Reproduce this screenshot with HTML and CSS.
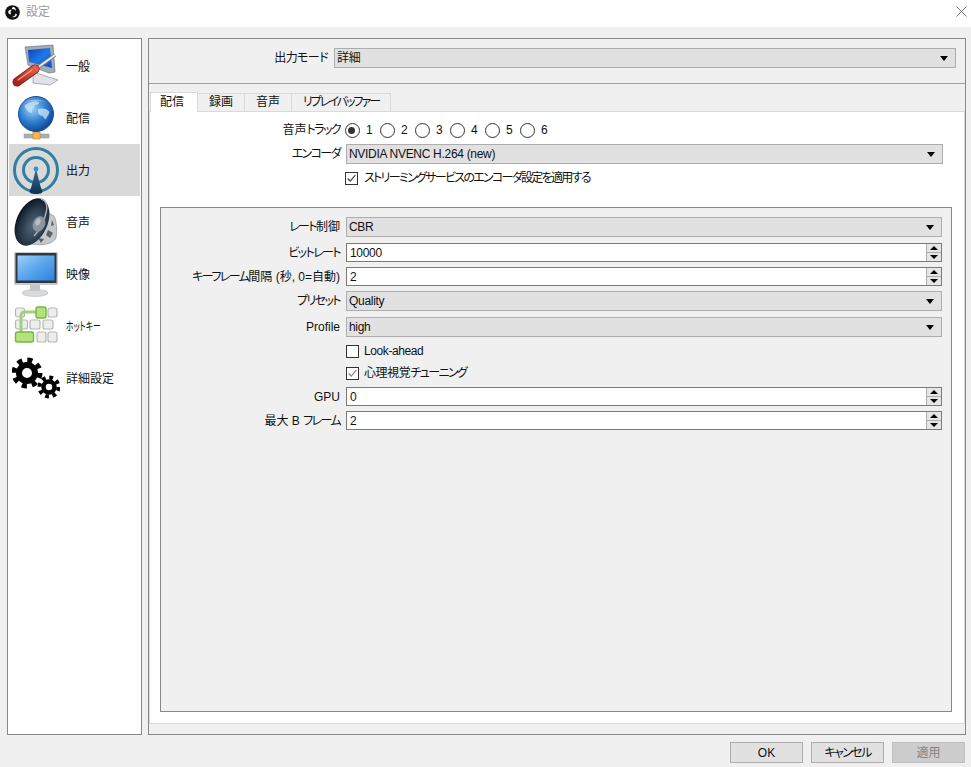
FILE: index.html
```html
<!DOCTYPE html>
<html lang="ja">
<head>
<meta charset="utf-8">
<title>設定</title>
<link rel="stylesheet" href="styles.css">
</head>
<body>
<div class="window">
  <header class="titlebar">
    <svg class="logo" viewBox="0 0 16 16" width="15" height="15"><circle cx="8" cy="8" r="7.800" fill="#111"/><path d="M8.500 2.200a3.200 3.200 0 0 1 3 4A3.600 3.600 0 0 0 7.300 4.400 2.500 2.500 0 0 1 8.500 2.200zM3.300 7.200a3.200 3.200 0 0 1 3.700-1.900 3.600 3.600 0 0 0-.5 4.500 2.500 2.500 0 0 1-2.200-.5A3.200 3.200 0 0 1 3.300 7.200zM12.600 9.500a3.200 3.200 0 0 1-5 3 3.600 3.600 0 0 0 3.500-3.200 2.500 2.500 0 0 1 1.500.2z" fill="#fff"/></svg>
    <span class="title">設定</span>
    <svg class="close" viewBox="0 0 11 11" width="11" height="11"><path d="M.5.5l10 10M10.500.5l-10 10" stroke="#777" stroke-width="1" fill="none"/></svg>
  </header>

  <main class="main">
    <nav class="sidebar">
      <div class="item">
        <svg class="icon" viewBox="0 0 48 52" width="48" height="52">
          <defs>
            <linearGradient id="scr" x1="0" y1="0" x2="1" y2="1"><stop offset="0" stop-color="#0a3fc0"/><stop offset=".5" stop-color="#1f78e4"/><stop offset="1" stop-color="#0a4cc8"/></linearGradient>
            <linearGradient id="hnd" x1="0" y1="1" x2="1" y2="0"><stop offset="0" stop-color="#a8241c"/><stop offset="1" stop-color="#e0604a"/></linearGradient>
          </defs>
          <path d="M21 32l25 8-8 5-17-2z" fill="#dfe2e8" stroke="#8d939c" stroke-width=".7"/>
          <path d="M13 7l28-2 2 27-6 1-21-8z" fill="#a4abb6" stroke="#6f7680" stroke-width=".7"/>
          <path d="M16 10l22-2 2 20-23-6z" fill="url(#scr)"/>
          <path d="M25 28L43 15" stroke="#777d85" stroke-width="3.600"/>
          <path d="M25 28L43 15" stroke="#e8eaee" stroke-width="2"/>
          <path d="M5 42L23 29" stroke="#7c1a14" stroke-width="9" stroke-linecap="round"/>
          <path d="M5 42L23 29" stroke="url(#hnd)" stroke-width="7.600" stroke-linecap="round"/>
          <path d="M6 40l14-10" stroke="#f2a090" stroke-width="1.200" stroke-linecap="round"/>
        </svg>
        <span class="nav-text">一般</span>
      </div>
      <div class="item">
        <svg class="icon" viewBox="0 0 48 52" width="48" height="52">
          <defs>
            <radialGradient id="glb" cx=".4" cy=".35" r=".7"><stop offset="0" stop-color="#9fd0f5"/><stop offset=".55" stop-color="#2f7fd0"/><stop offset="1" stop-color="#0c3f8c"/></radialGradient>
          </defs>
          <rect x="12" y="42" width="25" height="4" fill="#aab0b4" stroke="#8a9094" stroke-width=".5"/>
          <rect x="23" y="35" width="3" height="7" fill="#b9b9b9"/>
          <rect x="21" y="40" width="7" height="7" fill="#f6b552" stroke="#c98a2c" stroke-width=".7"/>
          <circle cx="24" cy="22" r="17.500" fill="url(#glb)" stroke="#16509c" stroke-width="1"/>
          <path d="M13 13c4-3 10-5 14-3 1 2-2 3-4 3-1 3-4 4-3 7-1 2-4 0-5-2-1-1-3-3-2-5zM26 17c3-1 8-1 11 2 1 3-2 5-3 8-1 1-2-1-3-3-2 0-4-1-5-3z" fill="#cfe6f7" opacity=".75"/>
          <path d="M12 11a17 11 0 0 1 24 0c-6-3-18-3-24 0z" fill="#fff" opacity=".4"/>
        </svg>
        <span class="nav-text">配信</span>
      </div>
      <div class="item active">
        <svg class="icon" viewBox="0 0 48 52" width="48" height="52">
          <defs>
            <linearGradient id="cone" x1="0" y1="0" x2="0" y2="1"><stop offset="0" stop-color="#3d6f96"/><stop offset="1" stop-color="#0f2f4d"/></linearGradient>
          </defs>
          <circle cx="24" cy="26" r="21.500" fill="none" stroke="#2f7f9f" stroke-width="3"/>
          <circle cx="24" cy="26" r="12.500" fill="none" stroke="#2f7f9f" stroke-width="3"/>
          <path d="M24 25c2 6 4 18 6 21 2 3-2 4-6 4s-8-1-6-4c2-3 4-15 6-21z" fill="url(#cone)"/>
          <circle cx="24" cy="25" r="2.400" fill="#2f8fd8"/>
        </svg>
        <span class="nav-text">出力</span>
      </div>
      <div class="item">
        <svg class="icon" viewBox="0 0 48 52" width="48" height="52">
          <defs>
            <radialGradient id="spk" cx=".6" cy=".55" r=".6"><stop offset="0" stop-color="#566a7c"/><stop offset=".6" stop-color="#2a3c4c"/><stop offset="1" stop-color="#0d1620"/></radialGradient>
          </defs>
          <path d="M26 12l16 8c3 6 3 15 2 22-3 6-14 8-24 6z" fill="#c4c9cc" stroke="#7a8084" stroke-width=".6"/>
          <path d="M36 34l5 3-3 5-4-3zM26 42l6 1-3 4zM40 24l2 5-3 1z" fill="#5a6266"/>
          <ellipse cx="20" cy="26" rx="15.500" ry="25" transform="rotate(24 20 26)" fill="url(#spk)"/>
          <path d="M29 3c5 1 7 6 5 14-2 9-6 17-12 23" fill="none" stroke="#a9b2b9" stroke-width="1.400"/>
          <ellipse cx="27" cy="28" rx="6" ry="8" transform="rotate(25 27 28)" fill="#8a959d"/>
          <ellipse cx="26" cy="26" rx="2.500" ry="3.500" transform="rotate(25 26 26)" fill="#b8c0c6"/>
        </svg>
        <span class="nav-text">音声</span>
      </div>
      <div class="item">
        <svg class="icon" viewBox="0 0 48 52" width="48" height="52">
          <defs>
            <linearGradient id="mon" x1="0" y1="0" x2="1" y2="1"><stop offset="0" stop-color="#9fd0f8"/><stop offset=".5" stop-color="#5aa6ee"/><stop offset="1" stop-color="#2f80dc"/></linearGradient>
          </defs>
          <ellipse cx="23" cy="45" rx="13" ry="3.500" fill="#d8dadc" stroke="#b8babc" stroke-width=".6"/>
          <rect x="18" y="36" width="10" height="7" fill="#c4c6c8"/>
          <rect x="2" y="4" width="44" height="33" rx="1.500" fill="#c9cbcd"/>
          <rect x="3.500" y="5" width="41" height="30" fill="#30383f"/>
          <rect x="5.500" y="7.500" width="37" height="25" fill="url(#mon)"/>
        </svg>
        <span class="nav-text">映像</span>
      </div>
      <div class="item">
        <svg class="icon" viewBox="0 0 48 52" width="48" height="52">
          <g fill="#eceeec" stroke="#b7b7b7" stroke-width="1.200">
            <rect x="3.500" y="8" width="9" height="9" rx="2"/>
            <rect x="36" y="8" width="9" height="9" rx="2"/>
            <rect x="3.500" y="20" width="12" height="9" rx="2"/>
            <rect x="18" y="20" width="10" height="9" rx="2"/>
            <rect x="31" y="20" width="10" height="9" rx="2"/>
            <rect x="25" y="32" width="9" height="10" rx="2"/>
            <rect x="36" y="32" width="9" height="10" rx="2"/>
          </g>
          <path d="M9 33V16c0-3 1-4 4-4h13" fill="none" stroke="#a5cf80" stroke-width="3"/>
          <rect x="24" y="7" width="10" height="11" rx="2" fill="#b4e27e" stroke="#76b83e" stroke-width="1.400"/>
          <rect x="3.500" y="32" width="18" height="10" rx="2" fill="#b4e27e" stroke="#76b83e" stroke-width="1.400"/>
        </svg>
        <span class="nav-text narrow">ホットキー</span>
      </div>
      <div class="item">
        <svg class="icon" viewBox="0 0 48 52" width="48" height="52">
          <g fill="none" stroke="#000">
            <circle cx="15" cy="21" r="8" stroke-width="6"/>
            <circle cx="15" cy="21" r="13" stroke-width="5" stroke-dasharray="5.100 5.100"/>
            <circle cx="37" cy="35" r="5.500" stroke-width="4.500"/>
            <circle cx="37" cy="35" r="9.500" stroke-width="4" stroke-dasharray="3.730 3.730"/>
          </g>
        </svg>
        <span class="nav-text">詳細設定</span>
      </div>
    </nav>

    <section class="panel">
      <div class="mode">
        <label class="mode-label"><span class="tight1">出力モード</span></label>
        <div class="combo"><span>詳細</span><i class="arrow"></i></div>
      </div>
      <div class="tabs-area">
        <div class="tabbar">
          <div class="tab selected w48">配信</div>
          <div class="tab w47">録画</div>
          <div class="tab w47">音声</div>
          <div class="tab w99"><span class="ka2">リプレイバッファー</span></div>
        </div>
        <div class="pane">
          <div class="form top-form">
            <div class="row">
              <label>音声<span class="ka">トラック</span></label>
              <div class="radios">
                <span class="radio on">1</span><span class="radio">2</span><span class="radio">3</span><span class="radio">4</span><span class="radio">5</span><span class="radio">6</span>
              </div>
            </div>
            <div class="row">
              <label><span class="ka">エンコーダ</span></label>
              <div class="combo"><span>NVIDIA NVENC H.264 (new)</span><i class="arrow"></i></div>
            </div>
            <div class="row">
              <label></label>
              <div class="check checked"><i class="box"><svg viewBox="0 0 13 13" width="11" height="11"><path d="M2 6.500l3 3 6-7" fill="none" stroke="#444" stroke-width="1.500"/></svg></i><span class="long">ストリーミングサービスのエンコーダ設定を適用する</span></div>
            </div>
          </div>
          <div class="group">
            <div class="form">
              <div class="row has-combo"><label><span class="ka">レート</span>制御</label><div class="combo"><span>CBR</span><i class="arrow"></i></div></div>
              <div class="row has-spin"><label><span class="ka">ビットレート</span></label><div class="spin"><span>10000</span><div class="spin-btns"><b class="up"></b><b class="down"></b></div></div></div>
              <div class="row has-spin"><label><span class="ka">キーフレーム</span>間隔 (秒, 0=自動)</label><div class="spin"><span>2</span><div class="spin-btns"><b class="up"></b><b class="down"></b></div></div></div>
              <div class="row has-combo"><label><span class="ka">プリセット</span></label><div class="combo"><span>Quality</span><i class="arrow"></i></div></div>
              <div class="row has-combo"><label>Profile</label><div class="combo"><span>high</span><i class="arrow"></i></div></div>
              <div class="row has-check first"><label></label><div class="check"><i class="box"></i><span>Look-ahead</span></div></div>
              <div class="row has-check"><label></label><div class="check checked"><i class="box"><svg viewBox="0 0 13 13" width="11" height="11"><path d="M2 6.500l3 3 6-7" fill="none" stroke="#888" stroke-width="1.500"/></svg></i><span>心理視覚<span class="ka">チューニング</span></span></div></div>
              <div class="row has-spin"><label>GPU</label><div class="spin"><span>0</span><div class="spin-btns"><b class="up"></b><b class="down"></b></div></div></div>
              <div class="row has-spin"><label>最大 B <span class="ka">フレーム</span></label><div class="spin"><span>2</span><div class="spin-btns"><b class="up"></b><b class="down"></b></div></div></div>
            </div>
          </div>
        </div>
      </div>
    </section>
  </main>

  <footer class="buttons">
    <button class="btn">OK</button>
    <button class="btn"><span class="ka">キャンセル</span></button>
    <button class="btn disabled">適用</button>
  </footer>
</div>
</body>
</html>
```
FILE: styles.css
```css
* { box-sizing: border-box; }
html, body { margin: 0; padding: 0; }
body {
  background: #f0f0f0;
  font-family: "Liberation Sans", "Noto Sans CJK JP", sans-serif;
  font-feature-settings: "palt";
  font-size: 12px;
  color: #111;
  line-height: 16px;
}
.window { width: 971px; height: 767px; display: flex; flex-direction: column; overflow: hidden; }

.ka { letter-spacing: -1.600px; }
.ka2 { letter-spacing: -2px; }
.tight1 { letter-spacing: -.6px; }

.titlebar { height: 27px; background: #fff; display: flex; align-items: flex-start; padding: 5px 4px 0 5px; flex: none; }
.logo { flex: none; }
.title { margin-left: 6px; margin-top: -1px; color: #999; }
.close { margin-left: auto; margin-top: 1px; }

.main { display: flex; gap: 6px; padding: 11px 5px 0 7px; height: 708px; flex: none; }

.sidebar { width: 135px; height: 697px; flex: none; background: #fff; border: 1px solid #888; padding: 1px; }
.item { height: 52px; display: flex; align-items: center; padding-left: 3px; gap: 6px; white-space: nowrap; }
.item.active { background: #d9d9d9; }
.icon { flex: none; display: block; }
.nav-text { padding-top: 2px; }
.nav-text.narrow { transform: scaleX(.65); transform-origin: left center; }

.panel { flex: 1; height: 697px; border: 1px solid #888; display: flex; flex-direction: column; }
.mode { height: 45px; flex: none; border-bottom: 1px solid #a0a0a0; display: flex; align-items: flex-start; padding: 9px 9px 0 0; }
.mode-label { width: 179px; text-align: right; line-height: 20px; margin-right: 6px; flex: none; }
.mode .combo { flex: 1; }

.tabs-area { flex: 1; display: flex; flex-direction: column; min-height: 0; padding-bottom: 10px; }
.tabbar { display: flex; height: 27px; align-items: flex-end; padding-left: 1px; flex: none; }
.tab { height: 18px; background: #f0f0f0; border: 1px solid #d9d9d9; border-bottom: 0; border-left: 0; text-align: center; line-height: 17px; white-space: nowrap; }
.tab.selected { height: 20px; background: #fff; position: relative; top: 1px; border-left: 1px solid #d9d9d9; line-height: 19px; padding-right: 4px; }
.w48 { width: 48px; }
.w47 { width: 47px; }
.w99 { width: 99px; }
.pane { flex: 1; background: #fff; border: 1px solid #d9d9d9; padding: 8px 12px 11px 10px; display: flex; flex-direction: column; }

.form { display: flex; flex-direction: column; }
.top-form { height: 87px; flex: none; padding: 0 9px 0 1px; gap: 4px; }
.row { display: flex; align-items: center; height: 20px; gap: 6px; }
.row > label { width: 179px; flex: none; text-align: right; white-space: nowrap; }
.row.has-combo { margin-bottom: 6px; }
.row.has-spin { height: 19px; margin-bottom: 5px; }
.row.has-check { margin-bottom: 4px; }
.row.has-check.first { margin-top: -2px; margin-bottom: 2px; }

.group { flex: 1; background: #f0f0f0; border: 1px solid #888; padding: 9px 9px 0 0; }

.combo { flex: 1; height: 20px; background: #e1e1e1; border: 1px solid #adadad; display: flex; align-items: center; padding: 0 7px 0 2px; }
.combo > span { flex: 1; letter-spacing: -.3px; }
.arrow { width: 0; height: 0; border: 4px solid transparent; border-top: 5px solid #000; border-bottom: 0; flex: none; }

.spin { flex: 1; height: 19px; background: #fff; border: 1px solid #7a7a7a; display: flex; align-items: center; padding-left: 3px; }
.spin > span { flex: 1; letter-spacing: -.3px; }
.spin-btns { width: 15px; height: 17px; display: flex; flex-direction: column; flex: none; border-left: 1px solid #adadad; }
.spin-btns b { flex: 1; background: #e6e6e6; border-bottom: 1px solid #adadad; display: flex; align-items: center; justify-content: center; }
.spin-btns b:last-child { border-bottom: 0; }
.spin-btns b::before { content: ""; width: 0; height: 0; border: 4px solid transparent; }
.spin-btns .up::before { border-bottom: 4px solid #000; border-top: 0; }
.spin-btns .down::before { border-top: 4px solid #000; border-bottom: 0; }

.radios { display: flex; margin-left: -1px; }
.radio { width: 35px; display: flex; align-items: center; gap: 6px; position: relative; }
.radio::before { content: ""; width: 13px; height: 13px; border: 1px solid #333; border-radius: 50%; background: #fff; flex: none; }
.radio.on::after { content: ""; position: absolute; left: 3px; top: 50%; width: 7px; height: 7px; margin-top: -3.500px; border-radius: 50%; background: #333; }

.check { display: flex; align-items: center; gap: 5px; white-space: nowrap; }
.check > span { letter-spacing: -.4px; }
.check > .long { letter-spacing: -1.700px; }
.top-form .check { margin-left: -1px; gap: 6px; }
.box { width: 13px; height: 13px; border: 1px solid #333; background: #fff; flex: none; display: flex; align-items: center; justify-content: center; }
.box svg { display: block; }

.buttons { flex: 1; display: flex; justify-content: flex-end; gap: 8px; padding: 7px 6px 0 0; align-items: flex-start; }
.btn { width: 73px; height: 21px; background: #e1e1e1; border: 1px solid #adadad; font: inherit; color: #111; padding: 0; }
.btn.disabled { background: #ccc; border-color: #bfbfbf; color: #838383; }
```
